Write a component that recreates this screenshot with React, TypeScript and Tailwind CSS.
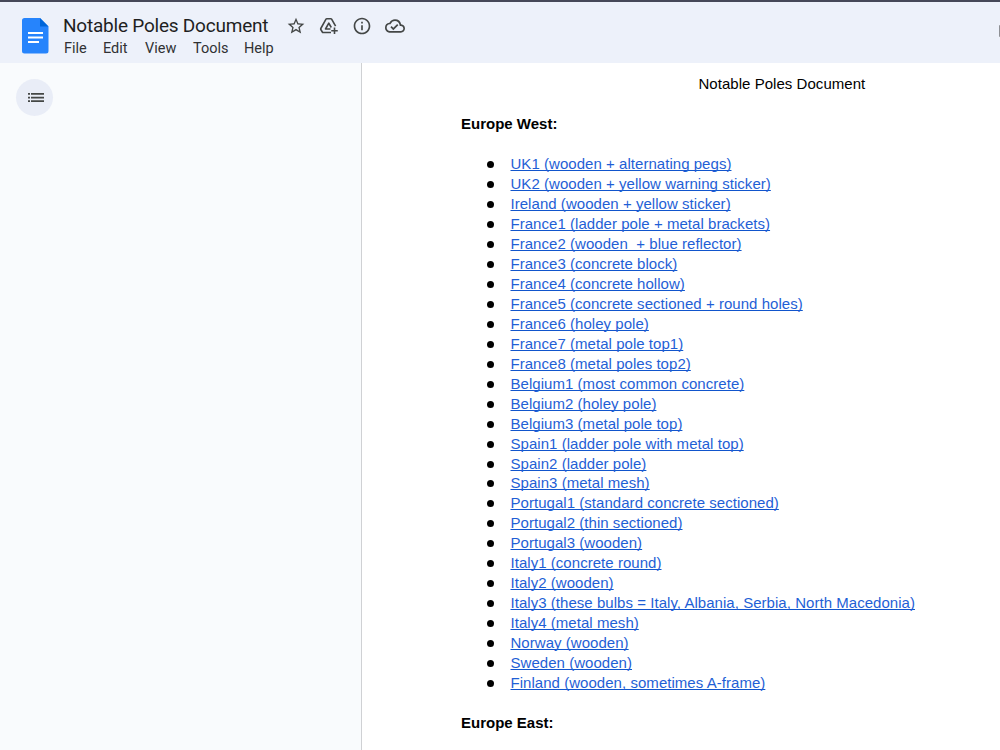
import { MdInfoOutline, MdOutlineCloudDone, MdStarBorder } from "react-icons/md";

const menus = [
  { label: "File", className: "w-[39px]" },
  { label: "Edit", className: "w-[42px]" },
  { label: "View", className: "w-[48px]" },
  { label: "Tools", className: "w-[51px]" },
  { label: "Help", className: "w-[40px]" },
];

const europeWest = [
  "UK1 (wooden + alternating pegs)",
  "UK2 (wooden + yellow warning sticker)",
  "Ireland (wooden + yellow sticker)",
  "France1 (ladder pole + metal brackets)",
  "France2 (wooden  + blue reflector)",
  "France3 (concrete block)",
  "France4 (concrete hollow)",
  "France5 (concrete sectioned + round holes)",
  "France6 (holey pole)",
  "France7 (metal pole top1)",
  "France8 (metal poles top2)",
  "Belgium1 (most common concrete)",
  "Belgium2 (holey pole)",
  "Belgium3 (metal pole top)",
  "Spain1 (ladder pole with metal top)",
  "Spain2 (ladder pole)",
  "Spain3 (metal mesh)",
  "Portugal1 (standard concrete sectioned)",
  "Portugal2 (thin sectioned)",
  "Portugal3 (wooden)",
  "Italy1 (concrete round)",
  "Italy2 (wooden)",
  "Italy3 (these bulbs = Italy, Albania, Serbia, North Macedonia)",
  "Italy4 (metal mesh)",
  "Norway (wooden)",
  "Sweden (wooden)",
  "Finland (wooden, sometimes A-frame)",
];

function DocsLogo() {
  return (
    <svg width="27" height="36" viewBox="0 0 27 36" className="mt-4 shrink-0">
      <path
        d="M2.5 0H18l8.5 8.5V33a2.5 2.5 0 0 1-2.5 2.5H2.5A2.5 2.5 0 0 1 0 33V2.5A2.5 2.5 0 0 1 2.5 0Z"
        fill="#2684fc"
      />
      <path d="M18 0l8.5 8.5H18V0Z" fill="#0066da" />
      <path d="M6 14h15v2H6zM6 18.5h15v2H6zM6 23h11v2H6z" fill="#fff" />
    </svg>
  );
}

function AddToDriveIcon() {
  return (
    <svg
      width="20"
      height="20"
      viewBox="0 0 20 20"
      fill="none"
      stroke="currentColor"
      strokeWidth="1.6"
      strokeLinejoin="round"
    >
      <path d="M12 16.5H4.2a1 1 0 0 1-.9-.5L1.8 13.5a1 1 0 0 1 0-1L7 3.2a1 1 0 0 1 .9-.5h3.8a1 1 0 0 1 .9.5l4 7" />
      <path d="M11.5 13h-5l3.3-5.8 2.5 4.3" />
      <path d="M15.5 11.5V18M12.25 14.75h6.5" />
    </svg>
  );
}

function Header() {
  return (
    <header className="flex h-[63px] shrink-0 border-t-2 border-[#464858] bg-[#edf1fa] pl-[22px] font-['Roboto',sans-serif]">
      <DocsLogo />
      <div className="ml-[14px] pt-3">
        <div className="flex h-6 items-center text-[#444746]">
          <h1 className="w-[223px] whitespace-nowrap text-[19px] tracking-[-0.22px] text-[#1f1f1f]">
            Notable Poles Document
          </h1>
          <div className="flex items-center gap-[13px]">
            <MdStarBorder size={20} />
            <AddToDriveIcon />
            <MdInfoOutline size={20} />
            <MdOutlineCloudDone size={20} />
          </div>
        </div>
        <nav className="ml-px flex h-[22px] items-center text-[14.5px] text-[#303134]">
          {menus.map((menu) => (
            <button key={menu.label} className={`text-left ${menu.className}`}>
              {menu.label}
            </button>
          ))}
        </nav>
      </div>
      {/* History button, cut off by the window edge */}
      <div className="ml-auto mt-[23px] h-3 w-px rounded-l-full bg-[#8e9095]" />
    </header>
  );
}

function Outline() {
  return (
    <aside className="w-[362px] shrink-0 border-r border-[#cfd1d4] bg-[#f9fbfd] pl-4 pt-4">
      <button className="flex size-[37px] items-center justify-center rounded-full bg-[#e9edf7] pl-[2px]">
        <svg width="16" height="9" viewBox="0 0 16 9" fill="#444746">
          <path d="M0 0h2v1.7H0zM3 0h13v1.7H3zM0 3.7h2v1.7H0zM3 3.7h13v1.7H3zM0 7.3h2V9H0zM3 7.3h13V9H3z" />
        </svg>
      </button>
    </aside>
  );
}

export default function App() {
  return (
    <div className="flex h-[750px] w-[1000px] flex-col overflow-hidden bg-white">
      <Header />
      <div className="flex min-h-0 flex-1">
        <Outline />
        <main className="flex-1 pl-[99px] pt-[11px] font-['Liberation_Sans',Arial,sans-serif] text-[15px] leading-5 text-black">
          <p className="ml-[237.5px] whitespace-nowrap tracking-[0.04px]">
            Notable Poles Document
          </p>
          <h2 className="mt-5 font-bold">Europe West:</h2>
          <ul className="mt-5">
            {europeWest.map((pole) => (
              <li key={pole} className="flex h-[19.98px] items-center pl-[26px]">
                <span className="mr-[16.5px] mt-px size-[7px] shrink-0 rounded-full bg-black" />
                <a
                  href="#"
                  className="whitespace-pre tracking-[0.04px] text-[#1f5fd6] underline decoration-[#1155cc] decoration-1 underline-offset-1 [text-decoration-skip-ink:none]"
                >
                  {pole}
                </a>
              </li>
            ))}
          </ul>
          <h2 className="mt-5 font-bold">Europe East:</h2>
        </main>
      </div>
    </div>
  );
}
